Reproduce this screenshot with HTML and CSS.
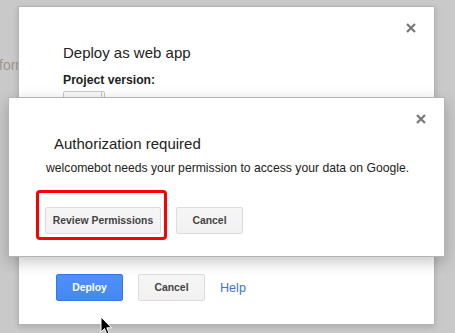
FILE: index.html
```html
<!DOCTYPE html>
<html>
<head>
<meta charset="utf-8">
<link rel="stylesheet" href="styles.css">
</head>
<body>
<div class="page">
  <div class="bg-text">form</div>

  <div class="dialog outer">
    <div class="close-row">
      <svg class="close" width="10" height="10" viewBox="0 0 10 10"><path d="M1 1L9 9M9 1L1 9" /></svg>
    </div>
    <div class="title">Deploy as web app</div>
    <div class="label">Project version:</div>
    <div class="select"><span class="sel-val">1</span><span class="sel-arrow"></span></div>
    <div class="footer">
      <button class="btn primary w67">Deploy</button>
      <button class="btn w67">Cancel</button>
      <a class="help">Help</a>
    </div>
  </div>

  <div class="dialog inner">
    <div class="close-row">
      <svg class="close" width="10" height="10" viewBox="0 0 10 10"><path d="M1 1L9 9M9 1L1 9" /></svg>
    </div>
    <div class="title auth-title">Authorization required</div>
    <div class="message">welcomebot needs your permission to access your data on Google.</div>
    <div class="actions">
      <div class="highlight">
        <button class="btn w116">Review Permissions</button>
      </div>
      <button class="btn w67">Cancel</button>
    </div>
  </div>

  <svg class="cursor" width="13" height="20" viewBox="0 0 13 20"><path d="M1 1L1 16L4.5 12.5L7 18.5L9.2 17.6L6.8 11.8L11.5 11.8Z" /></svg>
</div>
</body>
</html>
```

FILE: styles.css
```css
* { box-sizing: border-box; }
html, body { margin: 0; padding: 0; }
body {
  font-family: "Liberation Sans", Arial, sans-serif;
  background: #c9c9c9;
}
.page {
  position: relative;
  width: 455px;
  height: 333px;
  overflow: hidden;
  background: #c9c9c9;
}
.bg-text {
  position: absolute;
  left: -1px;
  top: 57px;
  font-size: 14px;
  line-height: 16px;
  color: #a0968c;
}
.dialog {
  position: absolute;
  background: #fff;
  border: 1px solid #b4b4b4;
  display: flex;
  flex-direction: column;
}
.outer {
  left: 18px;
  top: 6px;
  width: 417px;
  height: 319px;
  padding: 0 18px 0 44px;
  box-shadow: 0 2px 6px rgba(0,0,0,0.15);
}
.inner {
  left: 8px;
  top: 97px;
  width: 437px;
  height: 160px;
  padding: 0 18px 16px 27px;
  box-shadow: 0 5px 14px rgba(0,0,0,0.22);
}
.close-row {
  display: flex;
  justify-content: flex-end;
  margin-top: 16px;
  height: 10px;
}
.close path {
  stroke: #7a7a7a;
  stroke-width: 2.3;
  fill: none;
}
.title {
  margin-top: 10px;
  font-size: 15px;
  line-height: 20px;
  color: #222;
}
.auth-title {
  margin-left: 18px;
}
.label {
  margin-top: 9px;
  font-size: 12.2px;
  line-height: 16px;
  font-weight: bold;
  color: #222;
}
.select {
  margin-top: 3px;
  width: 42px;
  height: 22px;
  border: 1px solid #c8c8c8;
  border-radius: 2px;
  background: linear-gradient(#fafafa, #eeeeee);
  display: flex;
  font-size: 11px;
  color: #444;
}
.sel-val {
  flex: 1;
  padding: 4px 0 0 6px;
  border-right: 1px solid #c8c8c8;
}
.sel-arrow { width: 2px; }
.footer {
  margin-top: auto;
  margin-bottom: 23px;
  margin-left: -7px;
  display: flex;
  align-items: center;
  gap: 15px;
}
.btn {
  height: 27px;
  border: 1px solid #dcdcdc;
  border-radius: 2px;
  background: linear-gradient(#f6f6f6, #f1f1f1);
  font-family: "Liberation Sans", Arial, sans-serif;
  font-size: 10.4px;
  font-weight: bold;
  color: #444;
  padding: 0;
  text-align: center;
}
.w67 { width: 67px; }
.w116 { width: 116px; }
.primary {
  background: linear-gradient(#4d90fe, #4787ed);
  border-color: #3079ed;
  color: #fff;
}
.help {
  font-size: 12.6px;
  color: #3d74d6;
}
.message {
  margin-top: 6px;
  font-size: 12.2px;
  line-height: 16px;
  color: #222;
  margin-left: 10px;
}
.actions {
  margin-top: 14px;
  display: flex;
  align-items: flex-end;
  gap: 9px;
}
.highlight {
  width: 131px;
  height: 50px;
  border: 3px solid #f00;
  border-radius: 4px;
  padding: 14px 0 0 6px;
}
.actions > .btn {
  margin-bottom: 6px;
}
.cursor {
  position: absolute;
  left: 100px;
  top: 316px;
}
.cursor path {
  fill: #000;
  stroke: #fff;
  stroke-width: 1;
}
```
